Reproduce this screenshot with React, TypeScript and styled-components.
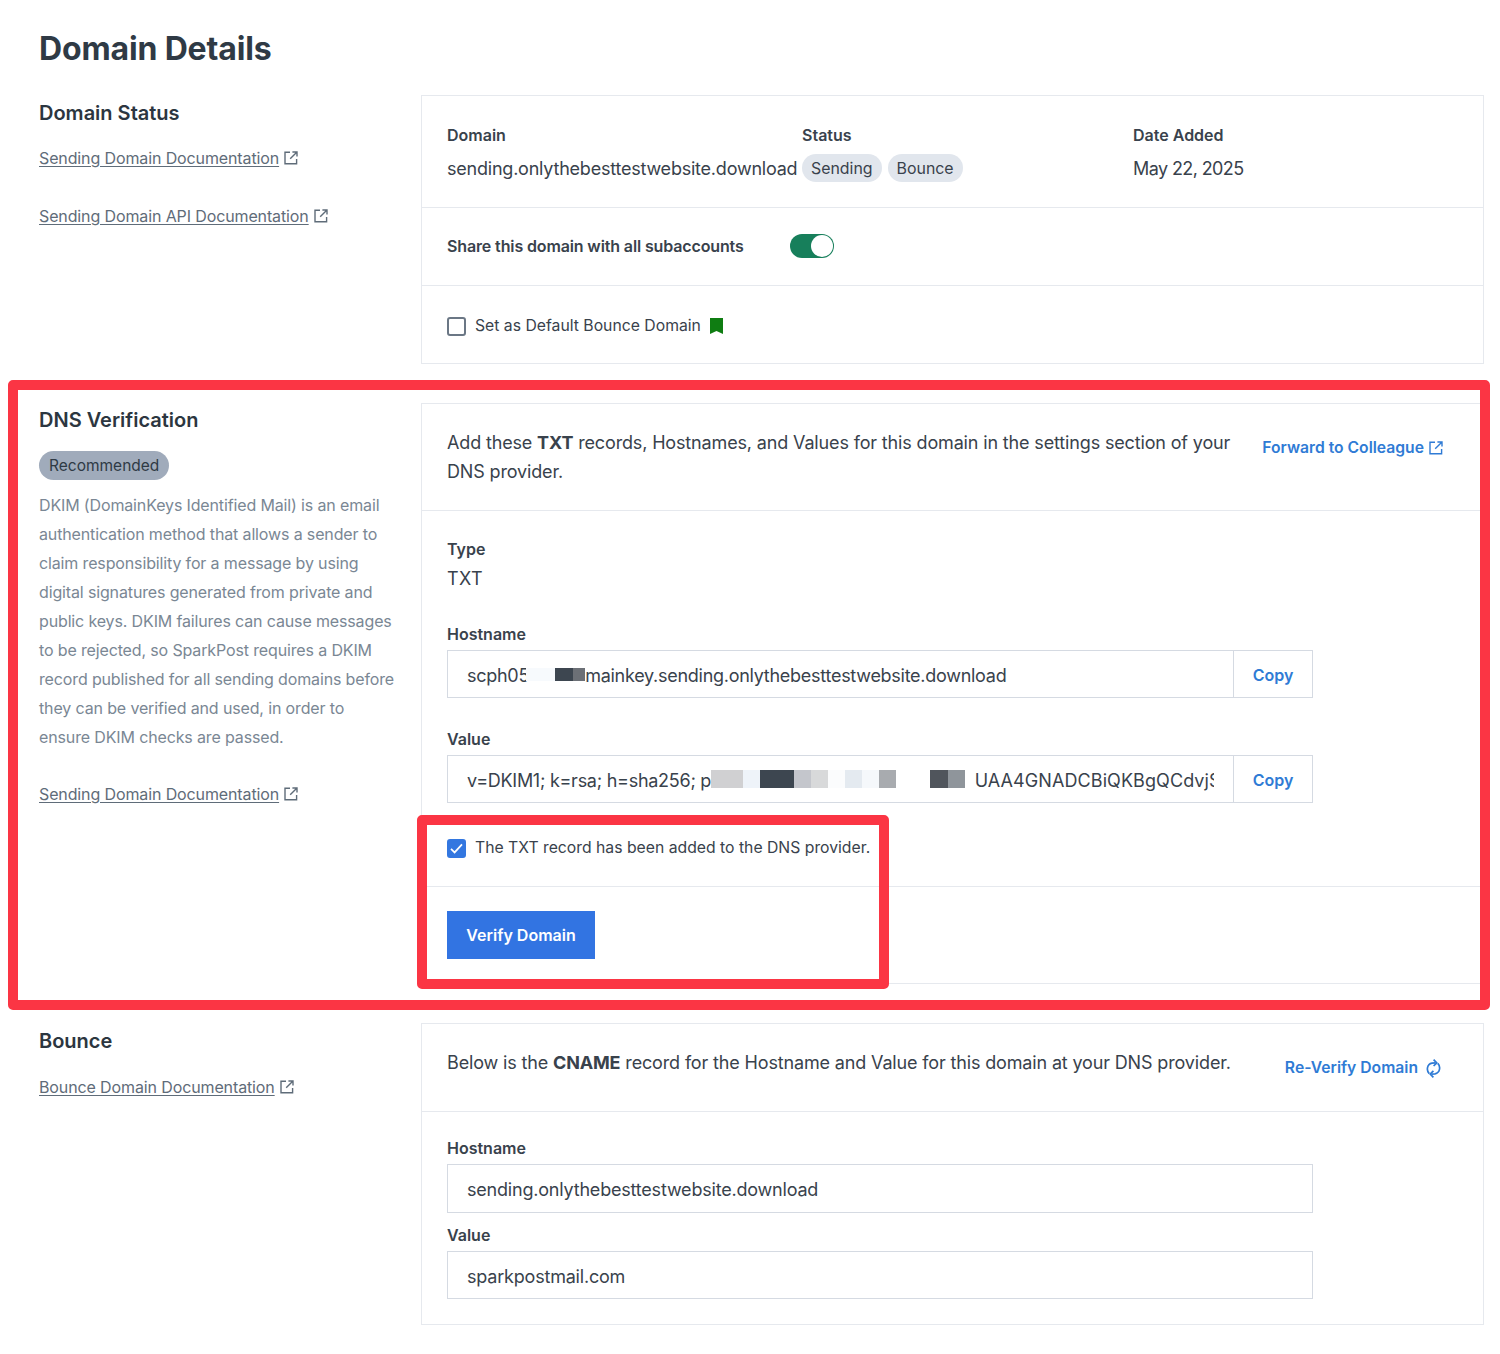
import React from "react";
import styled, { createGlobalStyle } from "styled-components";

const Global = createGlobalStyle`
  html, body { margin: 0; padding: 0; background: #fff; }
  body { font-family: Inter, "Liberation Sans", sans-serif; color: #39424c; }
`;

const Page = styled.main`
  position: relative;
  width: 1500px;
  height: 1354px;
  box-sizing: border-box;
  padding: 29px 16px 0 39px;
  overflow: hidden;
`;
const Title = styled.h1`
  margin: 0 0 26px;
  font-size: 32px;
  line-height: 40px;
  font-weight: 700;
  letter-spacing: -0.15px;
  color: #2f3a45;
`;
const Section = styled.section`
  display: grid;
  grid-template-columns: 382px 1063px;
  margin-bottom: 39px;
`;
const Aside = styled.div`
  display: flex;
  flex-direction: column;
  align-items: flex-start;
`;
const Heading = styled.h2<{ $top?: number }>`
  margin: ${(p) => p.$top ?? 5}px 0 0;
  font-size: 20px;
  line-height: 26px;
  font-weight: 600;
  color: #2c3640;
`;
const DocLink = styled.a<{ $top: number }>`
  display: inline-flex;
  align-items: center;
  gap: 5px;
  margin-top: ${(p) => p.$top}px;
  font-size: 16px;
  line-height: 24px;
  color: #5f6c79;
  text-decoration: underline;
  text-underline-offset: 2px;
  letter-spacing: -0.12px;
`;
const RecommendedPill = styled.span`
  margin-top: 18px;
  height: 29px;
  line-height: 29px;
  padding: 0 10px;
  border-radius: 15px;
  background: #a0abbb;
  color: #2f3a45;
  font-size: 15.5px;
`;
const Paragraph = styled.p`
  margin: 11px 0 0;
  font-size: 16px;
  line-height: 29px;
  color: #7a8794;
  letter-spacing: -0.14px;
`;
const Card = styled.div`
  border: 1px solid #e6e9ee;
  box-sizing: border-box;
`;
const Row = styled.div<{ $pt: number; $pb: number; $last?: boolean }>`
  padding: ${(p) => p.$pt}px 25px ${(p) => p.$pb}px;
  border-bottom: ${(p) => (p.$last ? "none" : "1px solid #e6e9ee")};
`;
const Columns = styled.div`
  display: flex;
`;
const Column = styled.div<{ $w: number }>`
  width: ${(p) => p.$w}px;
  flex: none;
`;
const Label = styled.div`
  font-size: 16px;
  line-height: 24px;
  font-weight: 600;
  color: #39424c;
`;
const Value = styled.div<{ $top?: number; $ls?: number }>`
  margin: ${(p) => (p.$top ?? 0) + 1}px 0 -1px;
  font-size: 18px;
  line-height: 34px;
  color: #39424c;
  white-space: nowrap;
  letter-spacing: ${(p) => p.$ls ?? -0.22}px;
`;
const Pills = styled.div`
  display: flex;
  gap: 6px;
  margin-top: 7px;
`;
const StatusPill = styled.span`
  height: 28px;
  line-height: 29px;
  padding: 0 9px;
  border-radius: 14px;
  background: #e1e6ed;
  font-size: 15.9px;
  color: #39424c;
`;
const ShareRow = styled.div`
  display: flex;
  align-items: center;
`;
const ShareLabel = styled(Label)`
  width: 343px;
  letter-spacing: -0.13px;
`;
const Toggle = styled.span`
  display: flex;
  justify-content: flex-end;
  width: 44px;
  height: 24px;
  box-sizing: border-box;
  padding: 1px;
  border-radius: 12px;
  background: #177f5b;
`;
const Knob = styled.span`
  width: 22px;
  height: 22px;
  border-radius: 50%;
  background: #fff;
`;
const CheckRow = styled.label<{ $top?: number }>`
  display: flex;
  align-items: center;
  gap: 9px;
  margin-top: ${(p) => p.$top ?? 0}px;
  font-size: 15.75px;
  line-height: 24px;
  color: #39424c;
  white-space: nowrap;
`;
const Box = styled.span<{ $on?: boolean }>`
  display: flex;
  align-items: center;
  justify-content: center;
  width: 19px;
  height: 19px;
  box-sizing: border-box;
  border-radius: 3px;
  border: 2px solid ${(p) => (p.$on ? "#3377e0" : "#6b7785")};
  background: ${(p) => (p.$on ? "#3377e0" : "#fff")};
`;
const IntroRow = styled.div`
  display: flex;
  align-items: flex-start;
  justify-content: space-between;
`;
const Intro = styled.div`
  font-size: 18px;
  line-height: 29px;
  color: #39424c;
  letter-spacing: -0.15px;
  white-space: nowrap;
`;
const ActionLink = styled.a<{ $mr: number; $gap: number }>`
  display: inline-flex;
  align-items: center;
  gap: ${(p) => p.$gap}px;
  margin: 8px ${(p) => p.$mr}px 0 0;
  font-size: 15.7px;
  line-height: 24px;
  font-weight: 600;
  color: #2f7bd5;
  text-decoration: none;
  white-space: nowrap;
`;
const FieldLabel = styled(Label)<{ $top: number }>`
  margin-top: ${(p) => p.$top}px;
  margin-bottom: 4px;
`;
const Field = styled.div<{ $h: number }>`
  display: flex;
  width: 866px;
  height: ${(p) => p.$h}px;
  box-sizing: border-box;
  border: 1px solid #d5dae2;
`;
const FieldText = styled.div<{ $ls?: number }>`
  flex: 1;
  min-width: 0;
  display: flex;
  align-items: center;
  margin: 0 19px;
  padding-top: 2px;
  overflow: hidden;
  font-size: 18px;
  letter-spacing: ${(p) => p.$ls ?? -0.2}px;
  color: #39424c;
  white-space: nowrap;
`;
const ClippedToken = styled.span`
  letter-spacing: 0.08px;
`;
const CopyButton = styled.div`
  flex: none;
  width: 78px;
  padding-top: 2px;
  box-sizing: content-box;
  display: flex;
  align-items: center;
  justify-content: center;
  border-left: 1px solid #d5dae2;
  font-size: 16px;
  font-weight: 600;
  color: #2f7bd5;
`;
const RedactionStrip = styled.span<{ $ml?: number; $mr?: number }>`
  flex: none;
  display: flex;
  margin: -2px ${(p) => p.$mr ?? 0}px 0 ${(p) => p.$ml ?? 0}px;
`;
const Redaction = styled.span<{ $c: string; $w: number }>`
  display: block;
  width: ${(p) => p.$w}px;
  height: 18px;
  background: ${(p) => p.$c};
`;
const ShortRedaction = styled(Redaction)`
  height: 13px;
`;
const VerifyButton = styled.button`
  display: block;
  width: 148px;
  height: 48px;
  padding: 0;
  border: none;
  background: #3274e2;
  color: #fff;
  font-family: inherit;
  font-size: 16px;
  font-weight: 600;
`;
const Callout = styled.div<{ $x: number; $y: number; $w: number; $h: number }>`
  position: absolute;
  left: ${(p) => p.$x}px;
  top: ${(p) => p.$y}px;
  width: ${(p) => p.$w}px;
  height: ${(p) => p.$h}px;
  box-sizing: border-box;
  border: 10px solid #fb3544;
  border-radius: 5px;
  pointer-events: none;
`;

const Ext = ({ c = "#5f6c79" }: { c?: string }) => (
  <svg width="14" height="14" viewBox="0 0 14 14" fill="none" stroke={c} strokeWidth="1.4">
    <path d="M6 1.2H1v11.6h11.6V8" />
    <path d="M8.4 1h4.6v4.6M13 1 6.2 7.8" />
  </svg>
);
const Sync = () => (
  <svg width="15" height="19" viewBox="0 0 15 19" fill="none" stroke="#2f7bd5" strokeWidth="1.7">
    <path d="M3.2 14.6C.2 11.4.8 5.2 6 4.2L9.6 3.9" />
    <path d="M11.8 4.4C14.8 7.6 14.2 13.8 9 14.8L5.4 15.1" />
    <path d="M7.6.6 10.8 3.9 7.6 7M7.4 11.8 4.2 15.1 7.4 18.4" />
  </svg>
);
const Bookmark = () => (
  <svg width="13" height="16" viewBox="0 0 13 16">
    <path d="M0 0h13v16l-6.5-3L0 16z" fill="#0f7d12" />
  </svg>
);
const Tick = () => (
  <svg width="13" height="11" viewBox="0 0 13 11" fill="none" stroke="#fff" strokeWidth="1.7">
    <path d="M1 5.8 4.6 9.4 12 1.4" />
  </svg>
);

const valueBlocks: [string, number][] = [
  ["#d0d0d2", 32], ["#eef3f9", 17], ["#3d4650", 34], ["#c4c6cc", 17], ["#d8d9da", 17],
  ["#fbfcfd", 17], ["#e4eaf0", 17], ["#f5f8fb", 17], ["#a8abaf", 17], ["#ffffff", 34],
  ["#50555c", 18], ["#8f959b", 17],
];

export default function App() {
  return (
    <Page>
      <Global />
      <Title>Domain Details</Title>

      <Section>
        <Aside>
          <Heading>Domain Status</Heading>
          <DocLink $top={20} href="#">Sending Domain Documentation <Ext /></DocLink>
          <DocLink $top={34} href="#">Sending Domain API Documentation <Ext /></DocLink>
        </Aside>
        <Card>
          <Row $pt={27} $pb={22}>
            <Columns>
              <Column $w={355}>
                <Label>Domain</Label>
                <Value $top={4}>sending.onlythebesttestwebsite.download</Value>
              </Column>
              <Column $w={331}>
                <Label>Status</Label>
                <Pills>
                  <StatusPill>Sending</StatusPill>
                  <StatusPill>Bounce</StatusPill>
                </Pills>
              </Column>
              <Column $w={300}>
                <Label>Date Added</Label>
                <Value $top={4} $ls={-0.6}>May 22, 2025</Value>
              </Column>
            </Columns>
          </Row>
          <Row $pt={26} $pb={27}>
            <ShareRow>
              <ShareLabel>Share this domain with all subaccounts</ShareLabel>
              <Toggle><Knob /></Toggle>
            </ShareRow>
          </Row>
          <Row $pt={28} $pb={25} $last>
            <CheckRow>
              <Box />
              Set as Default Bounce Domain
              <Bookmark />
            </CheckRow>
          </Row>
        </Card>
      </Section>

      <Section>
        <Aside>
          <Heading $top={4}>DNS Verification</Heading>
          <RecommendedPill>Recommended</RecommendedPill>
          <Paragraph>
            DKIM (DomainKeys Identified Mail) is an email<br />
            authentication method that allows a sender to<br />
            claim responsibility for a message by using<br />
            digital signatures generated from private and<br />
            public keys. DKIM failures can cause messages<br />
            to be rejected, so SparkPost requires a DKIM<br />
            record published for all sending domains before<br />
            they can be verified and used, in order to<br />
            ensure DKIM checks are passed.
          </Paragraph>
          <DocLink $top={30} href="#">Sending Domain Documentation <Ext /></DocLink>
        </Aside>
        <Card>
          <Row $pt={24} $pb={24}>
            <IntroRow>
              <Intro>
                Add these <b>TXT</b> records, Hostnames, and Values for this domain in the settings section of your<br />
                DNS provider.
              </Intro>
              <ActionLink $mr={15} $gap={5} href="#">Forward to Colleague <Ext c="#2f7bd5" /></ActionLink>
            </IntroRow>
          </Row>
          <Row $pt={26} $pb={26}>
            <Label>Type</Label>
            <Value $ls={0.4}>TXT</Value>
            <FieldLabel $top={27}>Hostname</FieldLabel>
            <Field $h={48}>
              <FieldText $ls={-0.27}>
                scph05
                <RedactionStrip $ml={-3}>
                  <ShortRedaction $c="#f7fafd" $w={29} />
                  <ShortRedaction $c="#3d4650" $w={18} />
                  <ShortRedaction $c="#6c7076" $w={12} />
                </RedactionStrip>
                mainkey.sending.onlythebesttestwebsite.download
              </FieldText>
              <CopyButton>Copy</CopyButton>
            </Field>
            <FieldLabel $top={29}>Value</FieldLabel>
            <Field $h={48}>
              <FieldText $ls={-0.27}>
                v=DKIM1; k=rsa; h=sha256; p=
                <RedactionStrip $ml={-12} $mr={10}>
                  {valueBlocks.map(([c, w], i) => (
                    <Redaction key={i} $c={c} $w={w} />
                  ))}
                </RedactionStrip>
                <ClippedToken>UAA4GNADCBiQKBgQCdvjS</ClippedToken>
              </FieldText>
              <CopyButton>Copy</CopyButton>
            </Field>
            <CheckRow $top={33}>
              <Box $on><Tick /></Box>
              The TXT record has been added to the DNS provider.
            </CheckRow>
          </Row>
          <Row $pt={24} $pb={24} $last>
            <VerifyButton>Verify Domain</VerifyButton>
          </Row>
        </Card>
      </Section>

      <Section>
        <Aside>
          <Heading>Bounce</Heading>
          <DocLink $top={21} href="#">Bounce Domain Documentation <Ext /></DocLink>
        </Aside>
        <Card>
          <Row $pt={24} $pb={31}>
            <IntroRow>
              <Intro>Below is the <b>CNAME</b> record for the Hostname and Value for this domain at your DNS provider.</Intro>
              <ActionLink $mr={17} $gap={8} href="#">Re-Verify Domain <Sync /></ActionLink>
            </IntroRow>
          </Row>
          <Row $pt={24} $pb={25} $last>
            <FieldLabel $top={0}>Hostname</FieldLabel>
            <Field $h={49}><FieldText>sending.onlythebesttestwebsite.download</FieldText></Field>
            <FieldLabel $top={10}>Value</FieldLabel>
            <Field $h={48}><FieldText>sparkpostmail.com</FieldText></Field>
          </Row>
        </Card>
      </Section>

      <Callout $x={8} $y={380} $w={1482} $h={630} />
      <Callout $x={417} $y={815} $w={472} $h={174} />
    </Page>
  );
}
